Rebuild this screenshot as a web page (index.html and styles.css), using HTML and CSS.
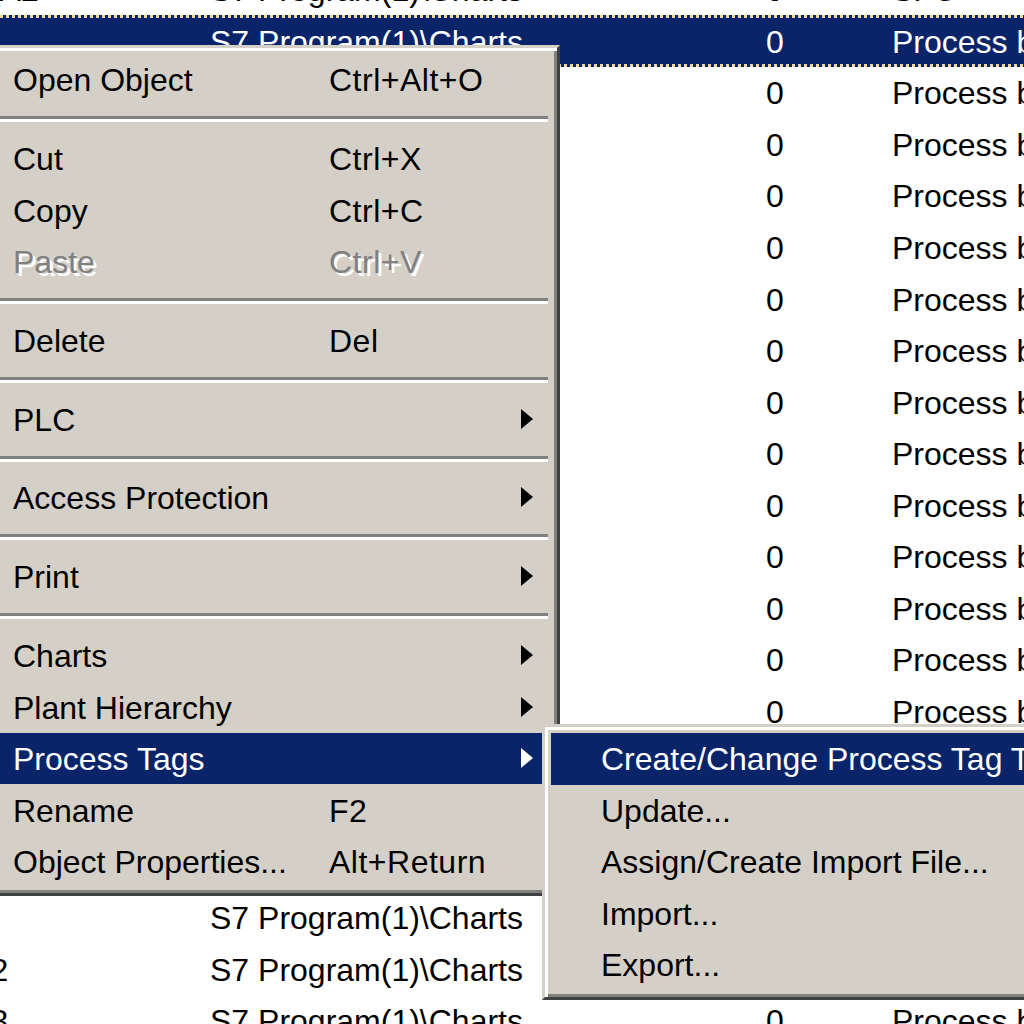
FILE: index.html
```html
<!DOCTYPE html>
<html>
<head>
<meta charset="utf-8">
<link rel="stylesheet" href="styles.css">
</head>
<body>
<div class="list">
  <div class="row"><span class="c-a">Motor_A2</span><span class="c-b">S7 Program(1)\Charts</span><span class="c-c">0</span><span class="c-d">SFC</span></div>
  <div class="row selected"><span class="c-a"></span><span class="c-b">S7 Program(1)\Charts</span><span class="c-c">0</span><span class="c-d">Process block</span></div>
  <div class="row"><span class="c-a"></span><span class="c-b">S7 Program(1)\Charts</span><span class="c-c">0</span><span class="c-d">Process block</span></div>
  <div class="row"><span class="c-a"></span><span class="c-b">S7 Program(1)\Charts</span><span class="c-c">0</span><span class="c-d">Process block</span></div>
  <div class="row"><span class="c-a"></span><span class="c-b">S7 Program(1)\Charts</span><span class="c-c">0</span><span class="c-d">Process block</span></div>
  <div class="row"><span class="c-a"></span><span class="c-b">S7 Program(1)\Charts</span><span class="c-c">0</span><span class="c-d">Process block</span></div>
  <div class="row"><span class="c-a"></span><span class="c-b">S7 Program(1)\Charts</span><span class="c-c">0</span><span class="c-d">Process block</span></div>
  <div class="row"><span class="c-a"></span><span class="c-b">S7 Program(1)\Charts</span><span class="c-c">0</span><span class="c-d">Process block</span></div>
  <div class="row"><span class="c-a"></span><span class="c-b">S7 Program(1)\Charts</span><span class="c-c">0</span><span class="c-d">Process block</span></div>
  <div class="row"><span class="c-a"></span><span class="c-b">S7 Program(1)\Charts</span><span class="c-c">0</span><span class="c-d">Process block</span></div>
  <div class="row"><span class="c-a"></span><span class="c-b">S7 Program(1)\Charts</span><span class="c-c">0</span><span class="c-d">Process block</span></div>
  <div class="row"><span class="c-a"></span><span class="c-b">S7 Program(1)\Charts</span><span class="c-c">0</span><span class="c-d">Process block</span></div>
  <div class="row"><span class="c-a"></span><span class="c-b">S7 Program(1)\Charts</span><span class="c-c">0</span><span class="c-d">Process block</span></div>
  <div class="row"><span class="c-a"></span><span class="c-b">S7 Program(1)\Charts</span><span class="c-c">0</span><span class="c-d">Process block</span></div>
  <div class="row"><span class="c-a"></span><span class="c-b">S7 Program(1)\Charts</span><span class="c-c">0</span><span class="c-d">Process block</span></div>
  <div class="row"><span class="c-a"></span><span class="c-b">S7 Program(1)\Charts</span><span class="c-c">0</span><span class="c-d">Process block</span></div>
  <div class="row"><span class="c-a"></span><span class="c-b">S7 Program(1)\Charts</span><span class="c-c">0</span><span class="c-d">Process block</span></div>
  <div class="row"><span class="c-a"></span><span class="c-b">S7 Program(1)\Charts</span><span class="c-c">0</span><span class="c-d">Process block</span></div>
  <div class="row"><span class="c-a"></span><span class="c-b">S7 Program(1)\Charts</span><span class="c-c">0</span><span class="c-d">Process block</span></div>
  <div class="row"><span class="c-a shifted">Valve12</span><span class="c-b">S7 Program(1)\Charts</span><span class="c-c">0</span><span class="c-d">Process block</span></div>
  <div class="row"><span class="c-a shifted">Valve13</span><span class="c-b">S7 Program(1)\Charts</span><span class="c-c">0</span><span class="c-d">Process block</span></div>
</div>

<div class="menu main">
  <div class="item"><span class="label">Open Object</span><span class="shortcut">Ctrl+Alt+O</span></div>
  <div class="sep"></div>
  <div class="item"><span class="label">Cut</span><span class="shortcut">Ctrl+X</span></div>
  <div class="item"><span class="label">Copy</span><span class="shortcut">Ctrl+C</span></div>
  <div class="item disabled"><span class="label">Paste</span><span class="shortcut">Ctrl+V</span></div>
  <div class="sep"></div>
  <div class="item"><span class="label">Delete</span><span class="shortcut">Del</span></div>
  <div class="sep"></div>
  <div class="item has-sub"><span class="label">PLC</span><span class="arrow"></span></div>
  <div class="sep"></div>
  <div class="item has-sub"><span class="label">Access Protection</span><span class="arrow"></span></div>
  <div class="sep"></div>
  <div class="item has-sub"><span class="label">Print</span><span class="arrow"></span></div>
  <div class="sep"></div>
  <div class="item has-sub"><span class="label">Charts</span><span class="arrow"></span></div>
  <div class="item has-sub"><span class="label">Plant Hierarchy</span><span class="arrow"></span></div>
  <div class="item has-sub active"><span class="label">Process Tags</span><span class="arrow"></span></div>
  <div class="item"><span class="label">Rename</span><span class="shortcut">F2</span></div>
  <div class="item"><span class="label">Object Properties...</span><span class="shortcut">Alt+Return</span></div>
</div>

<div class="menu sub">
  <div class="item active"><span class="label">Create/Change Process Tag Type...</span></div>
  <div class="item"><span class="label">Update...</span></div>
  <div class="item"><span class="label">Assign/Create Import File...</span></div>
  <div class="item"><span class="label">Import...</span></div>
  <div class="item"><span class="label">Export...</span></div>
</div>
</body>
</html>
```

FILE: styles.css
```css
html, body {
  margin: 0;
  padding: 0;
  width: 1024px;
  height: 1024px;
  overflow: hidden;
  background: #ffffff;
}

body {
  position: relative;
  font-family: "Liberation Sans", Arial, sans-serif;
}

/* ---------- background list ---------- */
.list {
  margin-top: -36.55px;
  display: flex;
  flex-direction: column;
  font-size: 32px;
  color: #000;
}

.row {
  position: relative;
  height: 51.55px;
  display: flex;
  align-items: center;
  padding-top: 3px;
  box-sizing: border-box;
  white-space: nowrap;
}

.row.selected {
  background: #0a246a;
  color: #ffffff;
}

.row.selected::before,
.row.selected::after {
  content: "";
  position: absolute;
  left: 0;
  right: 0;
  height: 3px;
  background: repeating-linear-gradient(90deg, #f5db95 0 3px, transparent 3px 6px);
}

.row.selected::before { top: 0; }
.row.selected::after { bottom: 0; }

.c-a {
  flex: none;
  width: 310px;
  margin-left: -100px;
  overflow: hidden;
}

.c-a.shifted {
  width: 315px;
  margin-left: -105px;
}

.c-b {
  flex: none;
  width: 556px;
}

.c-c {
  flex: none;
  width: 126px;
}

.c-d {
  flex: 1;
}

/* ---------- context menus ---------- */
.menu {
  position: absolute;
  box-sizing: border-box;
  background: #d4d0c8;
  border: 3px solid;
  border-color: #d4d0c8 #404040 #404040 #d4d0c8;
  box-shadow: inset 3px 3px 0 #ffffff, inset -3px -3px 0 #808080;
  padding: 6px;
  font-size: 32px;
  color: #000;
  white-space: nowrap;
}

.menu.main {
  left: -30px;
  top: 45px;
  width: 590px;
}

.menu.sub {
  left: 542px;
  top: 724px;
  width: 640px;
}

.item {
  position: relative;
  height: 51.5px;
  display: flex;
  align-items: center;
  padding-left: 34px;
  padding-top: 2px;
  box-sizing: border-box;
}

.menu.sub .item {
  padding-left: 50px;
}

.label {
  flex: none;
  width: 316px;
}

.menu.sub .label {
  width: auto;
}

.shortcut {
  letter-spacing: 0.5px;
}

.item.active {
  background: #0a246a;
  color: #ffffff;
}

.item.disabled {
  color: #808080;
  text-shadow: 3px 3px 0 #ffffff;
}

.arrow {
  position: absolute;
  right: 18px;
  top: 50%;
  margin-top: -10.5px;
  width: 0;
  height: 0;
  border-left: 12px solid currentColor;
  border-top: 10.5px solid transparent;
  border-bottom: 10.5px solid transparent;
}

.sep {
  height: 27.3px;
  display: flex;
  align-items: center;
  padding: 0 3px;
}

.sep::before {
  content: "";
  flex: 1;
  height: 3px;
  background: #808080;
  border-bottom: 3px solid #ffffff;
}
```
